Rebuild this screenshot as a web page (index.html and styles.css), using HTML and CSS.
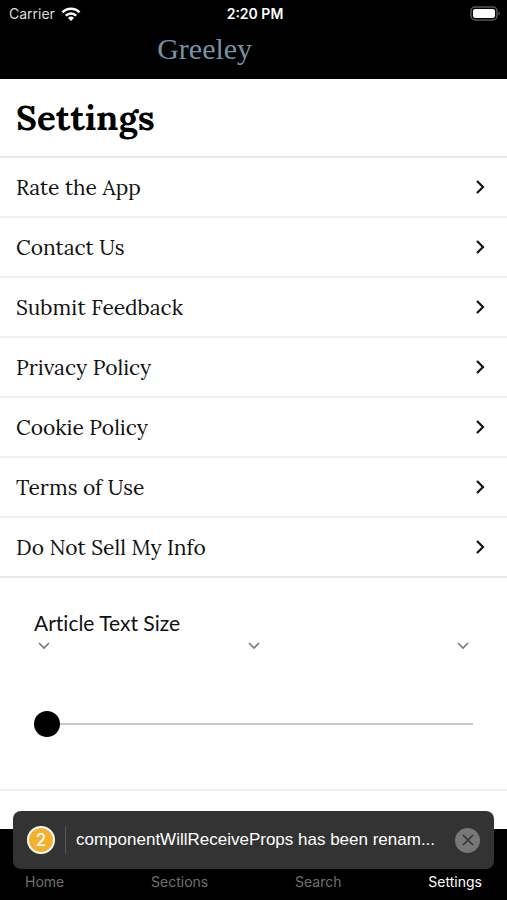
FILE: index.html
```html
<!DOCTYPE html>
<html lang="en">
<head>
	<meta charset="UTF-8">
	<meta name="viewport" content="width=device-width, initial-scale=1.0">
	<title>Settings</title>
	<link rel="stylesheet" href="styles.css">
</head>
<body>
	<header class="header">
		<div class="status">
			<div class="carrier">
				<span>Carrier</span>
				<svg width="20" height="16" viewBox="0 0 20 16" fill="none" stroke="#fff" stroke-width="2.6" aria-hidden="true">
					<path d="M1.5 6.3a12 12 0 0 1 17 0"/>
					<path d="M4.8 9.7a7.4 7.4 0 0 1 10.4 0"/>
					<path d="M10 15l-3-3.1a4.3 4.3 0 0 1 6 0z" fill="#fff" stroke="none"/>
				</svg>
			</div>
			<span class="time">2:20 PM</span>
			<svg class="battery" width="31" height="16" viewBox="0 0 31 16" aria-hidden="true">
				<rect x="1" y="1" width="26" height="13" rx="4" fill="none" stroke="#5a5a5a" stroke-width="1.5"/>
				<rect x="3" y="3" width="22" height="9" rx="2" fill="#fff"/>
				<path d="M28.5 5.5q3 2 0 4z" fill="#5a5a5a"/>
			</svg>
		</div>
		<div class="logo">Greeley</div>
	</header>

	<main class="content">
		<h1 class="title">Settings</h1>
		<nav class="list" aria-label="Settings">
			<a class="row" href="#rate">Rate the App <svg class="arrow" viewBox="0 0 10 16"><path d="M2 2l6 6-6 6"/></svg></a>
			<a class="row" href="#contact">Contact Us <svg class="arrow" viewBox="0 0 10 16"><path d="M2 2l6 6-6 6"/></svg></a>
			<a class="row" href="#feedback">Submit Feedback <svg class="arrow" viewBox="0 0 10 16"><path d="M2 2l6 6-6 6"/></svg></a>
			<a class="row" href="#privacy">Privacy Policy <svg class="arrow" viewBox="0 0 10 16"><path d="M2 2l6 6-6 6"/></svg></a>
			<a class="row" href="#cookies">Cookie Policy <svg class="arrow" viewBox="0 0 10 16"><path d="M2 2l6 6-6 6"/></svg></a>
			<a class="row" href="#terms">Terms of Use <svg class="arrow" viewBox="0 0 10 16"><path d="M2 2l6 6-6 6"/></svg></a>
			<a class="row" href="#info">Do Not Sell My Info <svg class="arrow" viewBox="0 0 10 16"><path d="M2 2l6 6-6 6"/></svg></a>
		</nav>
		<section class="text-size">
			<label class="size-label" for="size">Article Text Size</label>
			<div class="marks" aria-hidden="true">
				<svg class="mark" viewBox="0 0 12 8"><path d="M1 1l5 5 5-5"/></svg>
				<svg class="mark" viewBox="0 0 12 8"><path d="M1 1l5 5 5-5"/></svg>
				<svg class="mark" viewBox="0 0 12 8"><path d="M1 1l5 5 5-5"/></svg>
			</div>
			<input class="slider" id="size" type="range" min="0" max="2" value="0">
		</section>
	</main>

	<footer class="footer">
		<div class="toast" role="status">
			<span class="count">2</span>
			<span class="message">componentWillReceiveProps has been renam...</span>
			<button class="close" type="button" aria-label="Dismiss">
				<svg width="12" height="12" viewBox="0 0 12 12" fill="none" stroke="#333" stroke-width="1.6"><path d="M1 1l10 10M11 1L1 11"/></svg>
			</button>
		</div>
		<nav class="tabs" aria-label="Main">
			<a class="tab" href="#home">Home</a>
			<a class="tab" href="#sections">Sections</a>
			<a class="tab" href="#search">Search</a>
			<a class="tab active" href="#settings" aria-current="page">Settings</a>
		</nav>
	</footer>
</body>
</html>
```

FILE: styles.css
```css
* {
	box-sizing: border-box;
}
body {
	margin: 0;
	min-height: 100vh;
	display: flex;
	flex-direction: column;
	background: #fff;
	color: #111;
	font-family: Inter, "Liberation Sans", sans-serif;
}
a {
	color: inherit;
	text-decoration: none;
}

/* header */
.header {
	background: #000;
	color: #fff;
	padding-bottom: 9px;
}
.status {
	display: grid;
	grid-template-columns: 1fr auto 1fr;
	align-items: center;
	height: 27px;
	padding: 0 6px 0 9px;
	font-size: 14px;
}
.carrier {
	display: flex;
	align-items: center;
	gap: 6px;
	color: #ddd;
}
.time {
	font-weight: 600;
}
.battery {
	justify-self: end;
}
.logo {
	padding-left: 31%;
	font-family: "Liberation Serif", serif;
	font-size: 30px;
	line-height: 43px;
	color: #7393a3;
}

/* list of settings */
.content {
	flex: 1;
}
.title {
	margin: 0;
	padding: 16px 16px 15px;
	border-bottom: 2px solid #e8e8e8;
	font-family: Lora, "Liberation Serif", serif;
	font-size: 35px;
	line-height: 46px;
	color: #000;
}
.row {
	display: flex;
	align-items: center;
	justify-content: space-between;
	height: 60px;
	padding: 0 22px 0 16px;
	border-bottom: 2px solid #f0f0f0;
	font-family: Lora, "Liberation Serif", serif;
	font-size: 21px;
}
.row:last-child {
	border-color: #e8e8e8;
}
.arrow {
	width: 10px;
	height: 16px;
	fill: none;
	stroke: #111;
	stroke-width: 2.2;
}

/* article text size */
.text-size {
	padding: 32px 34px 51px;
	border-bottom: 2px solid #f0f0f0;
}
.size-label {
	display: block;
	font-family: Lato, sans-serif;
	font-size: 21px;
	font-variant-ligatures: none;
	line-height: 26px;
}
.marks {
	display: flex;
	justify-content: space-between;
	padding: 6px 4px 0;
}
.mark {
	width: 12px;
	height: 8px;
	fill: none;
	stroke: #777;
	stroke-width: 1.6;
}
.slider {
	display: block;
	appearance: none;
	width: 100%;
	height: 28px;
	margin: 60px 0 0;
	background: linear-gradient(#c8c8c8, #c8c8c8) center / 100% 2px no-repeat;
}
.slider::-webkit-slider-thumb {
	appearance: none;
	width: 26px;
	height: 26px;
	border-radius: 50%;
	background: #000;
}

/* tab bar with the warning over it */
.footer {
	position: relative;
	padding: 43px 25px 8px;
	background: #000;
}
.tabs {
	display: flex;
	justify-content: space-between;
	font-size: 14px;
	line-height: 20px;
	color: #707070;
}
.active {
	color: #fff;
}
.toast {
	position: absolute;
	left: 13px;
	right: 13px;
	bottom: 31px;
	display: flex;
	align-items: center;
	height: 58px;
	padding: 0 14px;
	border-radius: 8px;
	background: #333;
	color: #fff;
}
.count {
	width: 28px;
	height: 28px;
	border: 2px solid #fff;
	border-radius: 50%;
	background: #f5b02e;
	font-size: 17px;
	font-weight: 500;
	line-height: 24px;
	text-align: center;
}
.message {
	flex: 1;
	min-width: 0;
	margin-left: 10px;
	padding-left: 10px;
	border-left: 1px solid #555;
	font-family: "Liberation Sans", sans-serif;
	font-size: 17px;
	line-height: 28px;
	white-space: nowrap;
	overflow: hidden;
	text-overflow: ellipsis;
}
.close {
	display: flex;
	align-items: center;
	justify-content: center;
	width: 25px;
	height: 25px;
	margin-left: 8px;
	padding: 0;
	border: 0;
	border-radius: 50%;
	background: #777;
}
```
